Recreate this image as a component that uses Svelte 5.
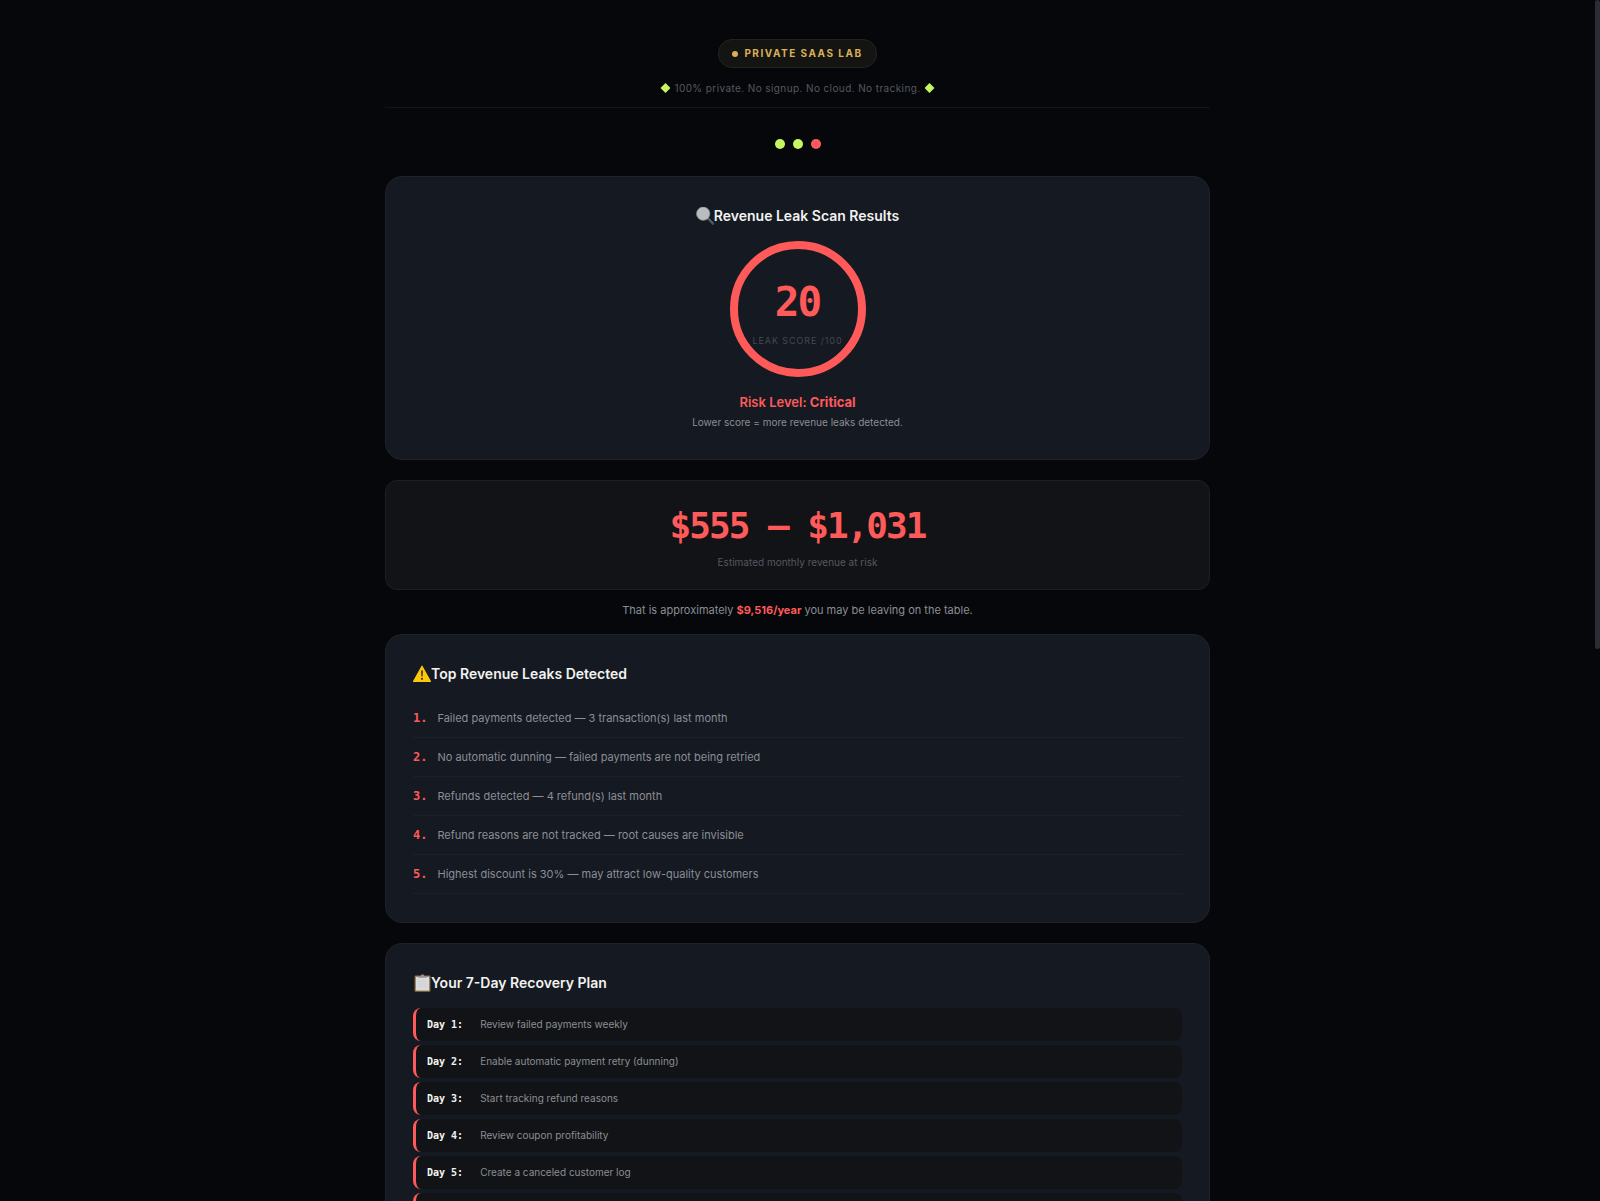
<script lang="ts">
  interface Step {
    day: number;
    text: string;
  }

  const score = 20;
  const steps = ['done', 'done', 'current'];

  const leaks = [
    'Failed payments detected — 3 transaction(s) last month',
    'No automatic dunning — failed payments are not being retried',
    'Refunds detected — 4 refund(s) last month',
    'Refund reasons are not tracked — root causes are invisible',
    'Highest discount is 30% — may attract low-quality customers',
  ];

  const plan: Step[] = [
    { day: 1, text: 'Review failed payments weekly' },
    { day: 2, text: 'Enable automatic payment retry (dunning)' },
    { day: 3, text: 'Start tracking refund reasons' },
    { day: 4, text: 'Review coupon profitability' },
    { day: 5, text: 'Create a canceled customer log' },
    { day: 6, text: 'Review results' },
  ];
</script>

<div class="viewport">
  <main class="page">
    <header>
      <div class="badge"><span class="badge-dot"></span>PRIVATE SAAS LAB</div>
      <p class="tagline">
        <span class="diamond"></span>
        <span>100% private. No signup. No cloud. No tracking.</span>
        <span class="diamond"></span>
      </p>
    </header>

    <div class="steps">
      {#each steps as step}
        <span class="step {step}"></span>
      {/each}
    </div>

    <section class="card result">
      <h2>
        <svg class="icon" viewBox="0 0 18 18" aria-hidden="true">
          <path d="M12 11.5 16.8 16.6" stroke="#43464b" stroke-width="2.8" stroke-linecap="round" />
          <path d="M12.2 11 17 16.2" stroke="#7d8084" stroke-width="0.8" stroke-linecap="round" />
          <circle cx="7.2" cy="6.7" r="6.6" fill="#b9bdbf" stroke="#96999c" stroke-width="0.8" />
        </svg>
        Revenue Leak Scan Results
      </h2>
      <div class="ring">
        <span class="score">{score}</span>
        <span class="score-label">LEAK SCORE /100</span>
      </div>
      <p class="risk">Risk Level: <strong>Critical</strong></p>
      <p class="hint">Lower score = more revenue leaks detected.</p>
    </section>

    <section class="money">
      <div class="amount">$555 – $1,031</div>
      <p>Estimated monthly revenue at risk</p>
    </section>

    <p class="yearly">
      That is approximately <strong>$9,516/year</strong> you may be leaving on the table.
    </p>

    <section class="card">
      <h2>
        <svg class="icon" viewBox="0 0 18 18" aria-hidden="true">
          <path d="M9 1.2 17.4 16.4H.6Z" fill="#fcc80c" stroke="#fcc80c" stroke-width="1.2" stroke-linejoin="round" />
          <path d="M8 5.6h2L9.6 11.6H8.4Z" fill="#3a3420" />
          <circle cx="9" cy="13.8" r="1.1" fill="#3a3420" />
        </svg>
        Top Revenue Leaks Detected
      </h2>
      <ol class="leaks">
        {#each leaks as leak, i}
          <li><span class="num">{i + 1}.</span>{leak}</li>
        {/each}
      </ol>
    </section>

    <section class="card">
      <h2>
        <svg class="icon" viewBox="0 0 18 18" aria-hidden="true">
          <rect x="1.6" y="1.4" width="15.8" height="16.4" rx="1" fill="#94703f" />
          <rect x="2.8" y="2.8" width="13.4" height="13.8" fill="#d8dadb" />
          <path d="M5 7.5h8.8M5 10h8.8M5 12.5h8.8" stroke="#cbcdcf" stroke-width="0.8" />
          <path d="M5.4 3.8V2.2h2.2L8.4.4h2.2l.8 1.8h2.2v1.6Z" fill="#8f9497" />
        </svg>
        Your 7-Day Recovery Plan
      </h2>
      <ul class="plan">
        {#each plan as item (item.day)}
          <li><span class="day">Day {item.day}:</span>{item.text}</li>
        {/each}
      </ul>
    </section>
  </main>

  <div class="scrollbar"><div class="thumb"></div></div>
</div>

<style>
  :global(body) {
    margin: 0;
    background: #05070a;
  }

  .viewport {
    display: flex;
    height: 100vh;
    overflow: hidden;
    font-family: Inter, sans-serif;
    color: #8b8e95;
  }

  .page {
    flex: 1;
    max-width: 825px;
    margin: 0 auto;
    padding-top: 39px;
  }

  .scrollbar {
    width: 5px;
  }

  .thumb {
    height: 54%;
    border-radius: 3px;
    background: #2a2d33;
  }

  p,
  h2,
  ol,
  ul {
    margin: 0;
    padding: 0;
  }

  ol,
  ul {
    list-style: none;
  }

  header {
    display: flex;
    flex-direction: column;
    align-items: center;
    gap: 12px;
    padding-bottom: 11px;
    border-bottom: 1px solid #131519;
  }

  .badge {
    display: flex;
    align-items: center;
    gap: 6px;
    padding: 0 13px;
    border: 1px solid #25231a;
    border-radius: 14px;
    background: #141412;
    color: #d9b057;
    font-size: 10px;
    font-weight: 700;
    line-height: 27px;
    letter-spacing: 0.15em;
  }

  .badge-dot {
    width: 6px;
    height: 6px;
    border-radius: 50%;
    background: #d9b057;
  }

  .tagline {
    display: flex;
    align-items: center;
    gap: 4px;
    color: #555960;
    font-size: 10px;
    line-height: 16px;
    letter-spacing: 0.04em;
  }

  .diamond {
    width: 10px;
    height: 10px;
    background: #c5f661;
    clip-path: polygon(50% 0, 100% 50%, 50% 100%, 0 50%);
  }

  .steps {
    display: flex;
    justify-content: center;
    gap: 8px;
    padding: 31px 0 27px;
  }

  .step {
    width: 10px;
    height: 10px;
    border-radius: 50%;
    background: #c5f661;
  }

  .step.current {
    background: #ff5a5a;
  }

  .card {
    margin-bottom: 20px;
    padding: 28px 27px;
    border: 1px solid #202227;
    border-radius: 17px;
    background: #151921;
  }

  h2 {
    display: flex;
    align-items: center;
    margin-bottom: 14px;
    color: #f2f2f0;
    font-size: 14px;
    font-weight: 600;
    line-height: 22px;
  }

  .icon {
    width: 18px;
    height: 18px;
  }

  .result {
    display: flex;
    flex-direction: column;
    align-items: center;
  }

  .ring {
    display: flex;
    flex-direction: column;
    align-items: center;
    justify-content: center;
    box-sizing: border-box;
    width: 136px;
    height: 136px;
    padding-top: 2px;
    border: 8px solid #ff5a5a;
    border-radius: 50%;
  }

  .score {
    color: #ff5a5a;
    font-family: "DejaVu Sans Mono", monospace;
    font-size: 41px;
    font-weight: 700;
    line-height: 60px;
    letter-spacing: -2px;
  }

  .score-label {
    margin-top: 1px;
    color: #45484f;
    font-size: 9px;
    line-height: 16px;
    letter-spacing: 0.1em;
    white-space: nowrap;
  }

  .risk {
    margin-top: 15px;
    color: #ff5a5a;
    font-size: 13px;
    font-weight: 600;
    line-height: 20px;
  }

  .hint {
    margin-top: 2px;
    font-size: 10px;
    line-height: 17px;
  }

  .money {
    padding: 20px 20px 19px;
    border: 1px solid #1d1f22;
    border-radius: 12px;
    background: #111316;
    text-align: center;
  }

  .amount {
    color: #ff5a5a;
    font-family: "DejaVu Sans Mono", monospace;
    font-size: 36px;
    font-weight: 700;
    line-height: 50px;
    letter-spacing: -2px;
  }

  .money p {
    margin-top: 3px;
    color: #55585f;
    font-size: 10px;
    line-height: 16px;
  }

  .yearly {
    margin: 10px 0 14px;
    font-size: 11px;
    line-height: 20px;
    text-align: center;
  }

  strong {
    font-weight: 700;
  }

  .yearly strong {
    color: #ff5a5a;
  }

  .leaks li {
    display: flex;
    align-items: center;
    gap: 10px;
    border-bottom: 1px solid #1c2027;
    font-size: 11px;
    line-height: 38px;
  }

  .num {
    color: #ff5a5a;
    font-family: "DejaVu Sans Mono", monospace;
    font-size: 12px;
    font-weight: 700;
  }

  .plan {
    display: flex;
    flex-direction: column;
    gap: 4px;
  }

  .plan li {
    display: flex;
    align-items: center;
    gap: 17px;
    padding: 9px 11px;
    border-left: 3px solid #ff5a5a;
    border-radius: 8px;
    background: #111316;
    font-size: 10px;
    line-height: 15px;
  }

  .day {
    color: #f2f2f0;
    font-family: "DejaVu Sans Mono", monospace;
    font-weight: 700;
  }
</style>
